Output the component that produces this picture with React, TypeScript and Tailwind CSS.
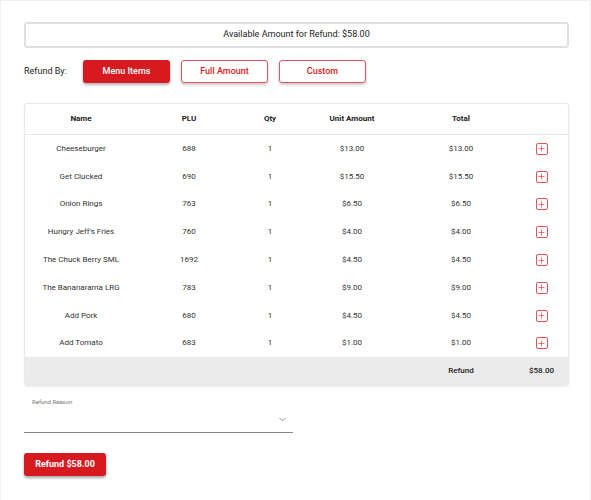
import { ChevronDown, Plus } from "lucide-react";

type Item = { name: string; plu: string; qty: number; unit: string; total: string };

const ITEMS: Item[] = [
  { name: "Cheeseburger", plu: "688", qty: 1, unit: "$13.00", total: "$13.00" },
  { name: "Get Clucked", plu: "690", qty: 1, unit: "$15.50", total: "$15.50" },
  { name: "Onion Rings", plu: "763", qty: 1, unit: "$6.50", total: "$6.50" },
  { name: "Hungry Jeff's Fries", plu: "760", qty: 1, unit: "$4.00", total: "$4.00" },
  { name: "The Chuck Berry SML", plu: "1692", qty: 1, unit: "$4.50", total: "$4.50" },
  { name: "The Bananarama LRG", plu: "783", qty: 1, unit: "$9.00", total: "$9.00" },
  { name: "Add Pork", plu: "680", qty: 1, unit: "$4.50", total: "$4.50" },
  { name: "Add Tomato", plu: "683", qty: 1, unit: "$1.00", total: "$1.00" },
];

const cols = "grid grid-cols-[112px_104px_58px_106px_112px_1fr] items-center text-center";

export default function App() {
  return (
    <div className="min-h-[500px] w-[591px] border-x border-t border-[#f0f0f0] bg-white pl-[23px] pr-[21px] pt-[21px] font-['Roboto',sans-serif] text-[#333]">
      <div className="flex h-[26px] items-center justify-center rounded-[3px] border-2 border-[#e0e0e0] text-[9px] text-[#222]">
        Available Amount for Refund: $58.00
      </div>

      <div className="mt-[12px] flex items-center">
        <span className="w-[59px] text-[9px] text-[#222]">Refund By:</span>
        <div className="flex gap-[11px]">
          <button className="h-[23px] w-[87px] rounded-[3px] bg-[#d71920] text-[9px] font-medium text-white shadow-[0_2px_3px_rgba(0,0,0,0.3)]">
            Menu Items
          </button>
          <button className="h-[23px] w-[87px] rounded-[3px] border border-[#e0555b] bg-white text-[9px] font-medium text-[#d71920] shadow-[0_2px_3px_rgba(0,0,0,0.2)]">
            Full Amount
          </button>
          <button className="h-[23px] w-[87px] rounded-[3px] border border-[#e0555b] bg-white text-[9px] font-medium text-[#d71920] shadow-[0_2px_3px_rgba(0,0,0,0.2)]">
            Custom
          </button>
        </div>
      </div>

      <div className="mt-[20px] overflow-hidden rounded-[3px] border border-[#e8e8e8] shadow-[0_1px_2px_rgba(0,0,0,0.08)]">
        <div className={`${cols} h-[31px] border-b border-[#e8e8e8] text-[8px] font-bold text-[#222]`}>
          <span>Name</span>
          <span>PLU</span>
          <span>Qty</span>
          <span>Unit Amount</span>
          <span>Total</span>
          <span />
        </div>
        <div>
          {ITEMS.map((it) => (
            <div key={it.name} className={`${cols} h-[27.8px] text-[8px] text-[#333]`}>
              <span>{it.name}</span>
              <span>{it.plu}</span>
              <span>{it.qty}</span>
              <span>{it.unit}</span>
              <span>{it.total}</span>
              <span className="flex justify-center pr-[2px]">
                <span className="flex h-[12px] w-[12px] items-center justify-center rounded-[2px] border border-[#e0555b] text-[#d71920]">
                  <Plus size={9} strokeWidth={1.5} />
                </span>
              </span>
            </div>
          ))}
        </div>
        <div className={`${cols} h-[28px] bg-[#ebebeb] text-[8px] text-[#222]`}>
          <span />
          <span />
          <span />
          <span />
          <span className="font-medium">Refund</span>
          <span className="pr-[2px] font-medium">$58.00</span>
        </div>
      </div>

      <div className="mt-[11px] w-[269px]">
        <div className="pl-[8px] text-[6px] text-[#777]">Refund Reason</div>
        <div className="flex h-[27px] items-center justify-end border-b border-[#888] pr-[5px] text-[#666]">
          <ChevronDown size={11} strokeWidth={1.5} />
        </div>
      </div>

      <button className="mt-[20px] h-[23px] w-[82px] rounded-[3px] bg-[#d71920] text-[9px] font-bold text-white shadow-[0_2px_3px_rgba(0,0,0,0.35)]">
        Refund $58.00
      </button>
    </div>
  );
}
